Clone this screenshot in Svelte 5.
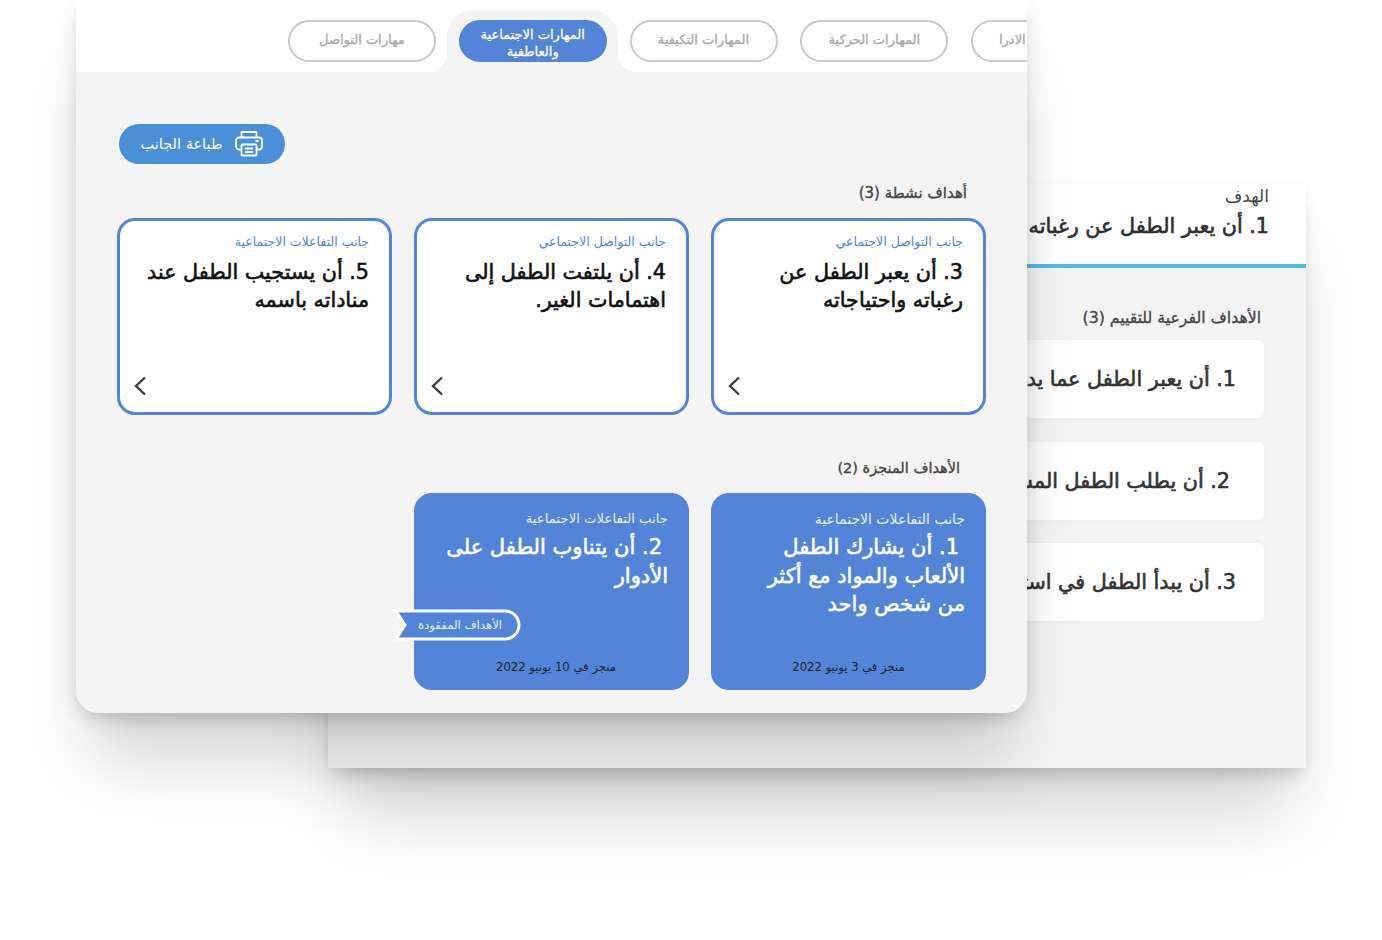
<script lang="ts">
	const tabs = [
		{ label: 'مهارات التواصل' },
		{ label: 'المهارات الاجتماعية والعاطفية', active: true },
		{ label: 'المهارات التكيفية' },
		{ label: 'المهارات الحركية' },
		{ label: 'المهارات الادرا' }
	];

	const active = [
		{ area: 'جانب التفاعلات الاجتماعية', lines: ['5. أن يستجيب الطفل عند', 'مناداته باسمه'] },
		{ area: 'جانب التواصل الاجتماعي', lines: ['4. أن يلتفت الطفل إلى', 'اهتمامات الغير.'] },
		{ area: 'جانب التواصل الاجتماعي', lines: ['3. أن يعبر الطفل عن', 'رغباته واحتياجاته'] }
	];

	const subGoals = [
		'1. أن يعبر الطفل عما يدور حوله',
		'2. أن يطلب الطفل المساعدة',
		'3. أن يبدأ الطفل في استخدام'
	];
</script>

<main class="desk">
	<section class="window back" dir="rtl">
		<header class="back-head">
			<span class="back-label">الهدف</span>
			<h2>1. أن يعبر الطفل عن رغباته واحتياجاته</h2>
		</header>
		<div class="back-body">
			<h3>الأهداف الفرعية للتقييم (3)</h3>
			{#each subGoals as goal}
				<div class="sub-row">{goal}</div>
			{/each}
		</div>
	</section>

	<section class="window front">
		<nav class="tabs">
			{#each tabs as tab}
				<div class="tab-wrap" class:active={tab.active}>
					<button class="tab" dir="rtl">{tab.label}</button>
				</div>
			{/each}
		</nav>

		<div class="front-body">
			<button class="print">
				<span dir="rtl">طباعة الجانب</span>
				<svg width="28" height="27" viewBox="0 0 28 27" fill="none" stroke="#fff" stroke-width="1.8" stroke-linejoin="round">
					<path d="M6.500 7.500V2h15v5.500" />
					<path d="M6.500 19.500H4a3 3 0 0 1-3-3v-6a3 3 0 0 1 3-3h20a3 3 0 0 1 3 3v6a3 3 0 0 1-3 3h-2.500" />
					<rect x="6.500" y="14.500" width="15" height="11" rx="1" />
					<path d="M10 18.500h8M10 22h8M20.500 11h3" />
				</svg>
			</button>

			<h4 class="active-title" dir="rtl">أهداف نشطة (3)</h4>
			<div class="cards">
				{#each active as card}
					<article class="card" dir="rtl">
						<span class="area">{card.area}</span>
						<p class="goal">{card.lines[0]}<br />{card.lines[1]}</p>
						<svg class="chev" width="14" height="20" viewBox="0 0 14 20" fill="none" stroke="#3c3c3c" stroke-width="2.400">
							<path d="M12 1.500 3 10l9 8.500" />
						</svg>
					</article>
				{/each}
			</div>

			<h4 class="done-title" dir="rtl">الأهداف المنجزة (2)</h4>
			<div class="cards">
				<div class="card-slot"></div>
				<article class="card done" dir="rtl">
					<span class="area">جانب التفاعلات الاجتماعية</span>
					<p class="goal">2. أن يتناوب الطفل على<br />الأدوار</p>
					<span class="date shifted">منجز في 10 يونيو 2022</span>
					<div class="ribbon">
						<svg width="127" height="32" viewBox="0 0 127 32">
							<path d="M2 2H111a14 14 0 0 1 0 28H2l9-14z" fill="#5285d8" stroke="#fff" stroke-width="3" />
						</svg>
						<span>الأهداف المفقودة</span>
					</div>
				</article>
				<article class="card done large" dir="rtl">
					<span class="area">جانب التفاعلات الاجتماعية</span>
					<p class="goal">1. أن يشارك الطفل<br />الألعاب والمواد مع أكثر<br />من شخص واحد</p>
					<span class="date">منجز في 3 يونيو 2022</span>
				</article>
			</div>
		</div>
	</section>
</main>

<style>
	:global(body) {
		margin: 0;
		background: #fff;
	}

	.desk {
		position: relative;
		width: 1382px;
		height: 940px;
		overflow: hidden;
		font-family: 'DejaVu Sans', sans-serif;
	}

	.window {
		position: absolute;
		box-sizing: border-box;
	}

	.back {
		left: 328px;
		top: 183px;
		width: 978px;
		height: 585px;
		background: #f4f4f4;
		box-shadow:
			0 60px 70px -14px rgba(0, 0, 0, 0.16),
			0 12px 18px -6px rgba(0, 0, 0, 0.18),
			0 0 8px rgba(0, 0, 0, 0.04);
	}

	.back-head {
		height: 85px;
		padding: 3px 37px 0 0;
		box-sizing: border-box;
		background: #fff;
		border-bottom: 4px solid #52bae2;
	}

	.back-label {
		display: block;
		font-size: 17px;
		line-height: 20px;
		color: #444;
	}

	h2 {
		margin: 6px 0 0;
		font-size: 20.700px;
		line-height: 28px;
		font-weight: 400;
		-webkit-text-stroke: 0.6px currentColor;
		color: #2e2e2e;
		white-space: nowrap;
	}

	.back-body {
		padding: 41px 42px 0 0;
	}

	h3 {
		margin: 0 3px 13px 0;
		font-size: 15.700px;
		line-height: 18px;
		font-weight: 400;
		-webkit-text-stroke: 0.35px currentColor;
		color: #444;
	}

	.sub-row {
		display: flex;
		align-items: center;
		height: 78px;
		margin-bottom: 23.500px;
		padding-right: 28px;
		background: #fff;
		border-radius: 6px;
		box-shadow: 0 1px 6px rgba(0, 0, 0, 0.03);
		font-size: 20.700px;
		-webkit-text-stroke: 0.6px currentColor;
		color: #333;
		white-space: nowrap;
	}

	.sub-row:nth-child(3) {
		padding-right: 34px;
	}

	.front {
		left: 76px;
		top: 0;
		width: 951px;
		height: 713px;
		background: #f4f4f4;
		border-radius: 0 0 22px 22px;
		box-shadow:
			0 60px 70px -14px rgba(0, 0, 0, 0.17),
			0 10px 20px -6px rgba(0, 0, 0, 0.18),
			0 0 26px rgba(0, 0, 0, 0.06);
	}

	.tabs {
		display: flex;
		height: 72px;
		padding: 10px 0 0 200px;
		box-sizing: border-box;
		background: #fff;
		overflow: hidden;
	}

	.tab-wrap {
		position: relative;
		flex: none;
		width: 170.750px;
		height: 62px;
		padding: 10px 0 0 12px;
		box-sizing: border-box;
	}

	.tab-wrap.active {
		background: #f4f4f4;
		border-radius: 26px 26px 0 0;
	}

	.tab-wrap.active::before,
	.tab-wrap.active::after {
		content: '';
		position: absolute;
		bottom: 0;
		width: 18px;
		height: 18px;
	}

	.tab-wrap.active::before {
		right: 100%;
		background: radial-gradient(circle at 0 0, #fff 17.500px, #f4f4f4 18px);
	}

	.tab-wrap.active::after {
		left: 100%;
		background: radial-gradient(circle at 100% 0, #fff 17.500px, #f4f4f4 18px);
	}

	.tab {
		position: relative;
		z-index: 1;
		display: block;
		width: 148px;
		height: 42px;
		padding: 0 8px 3px;
		box-sizing: border-box;
		background: #fff;
		border: 2px solid #c8c8c8;
		border-radius: 21px;
		font-family: inherit;
		font-size: 13px;
		line-height: 16px;
		-webkit-text-stroke: 0.3px currentColor;
		color: #a9a9a9;
		white-space: nowrap;
		overflow: hidden;
	}

	.tab-wrap:last-child .tab {
		padding-right: 22px;
	}

	.active .tab {
		padding: 3px 10px 0;
		background: #5285d8;
		border-color: #5285d8;
		line-height: 17px;
		color: #fff;
		white-space: normal;
	}

	.front-body {
		padding: 52px 41px 0;
	}

	.print {
		display: flex;
		align-items: center;
		justify-content: center;
		gap: 13px;
		width: 166px;
		height: 40px;
		margin-left: 2px;
		padding: 0;
		background: #4a90d9;
		border: 0;
		border-radius: 20px;
		font-family: inherit;
		font-size: 14.500px;
		color: #fff;
	}

	.print svg {
		margin-top: -2px;
	}

	h4 {
		margin: 0;
		font-size: 14.500px;
		line-height: 18px;
		font-weight: 400;
		-webkit-text-stroke: 0.35px currentColor;
		color: #444;
	}

	.active-title {
		margin: 20px 19px 16px 0;
		font-size: 15px;
	}

	.done-title {
		margin: 44px 26px 16px 0;
	}

	.cards {
		display: grid;
		grid-template-columns: repeat(3, 275px);
		gap: 22px;
	}

	.card {
		position: relative;
		display: flex;
		flex-direction: column;
		height: 197px;
		padding: 12px 20px 0;
		box-sizing: border-box;
		background: #fff;
		border: 3px solid #5285d8;
		border-radius: 18px;
	}

	.area {
		font-size: 12.500px;
		line-height: 18px;
		color: #5285d8;
	}

	.goal {
		margin: 7px 0 0;
		font-size: 20.700px;
		line-height: 28px;
		-webkit-text-stroke: 0.6px currentColor;
		color: #111;
		white-space: nowrap;
	}

	.chev {
		position: absolute;
		left: 13px;
		bottom: 16px;
	}

	.done {
		padding: 17px 21px 0;
		background: #5285d8;
		border: 0;
		color: #fff;
	}

	.done .area {
		font-size: 13.250px;
		color: #eaf0fb;
	}

	.done.large .area {
		font-size: 14px;
	}

	.done .goal {
		margin-top: 5px;
		font-size: 21px;
		line-height: 28.500px;
		color: #fff;
		text-indent: 6px;
	}

	.date {
		position: absolute;
		left: 0;
		right: 0;
		bottom: 14px;
		font-size: 11.600px;
		line-height: 18px;
		text-align: center;
		color: #1d1d1d;
	}

	.date.shifted {
		left: 9px;
	}

	.ribbon {
		position: absolute;
		left: -20px;
		top: 116px;
		width: 127px;
		height: 32px;
	}

	.ribbon svg {
		display: block;
	}

	.ribbon span {
		position: absolute;
		left: 24px;
		top: 7px;
		font-size: 11.700px;
		line-height: 18px;
		color: #e8effa;
		white-space: nowrap;
	}
</style>
